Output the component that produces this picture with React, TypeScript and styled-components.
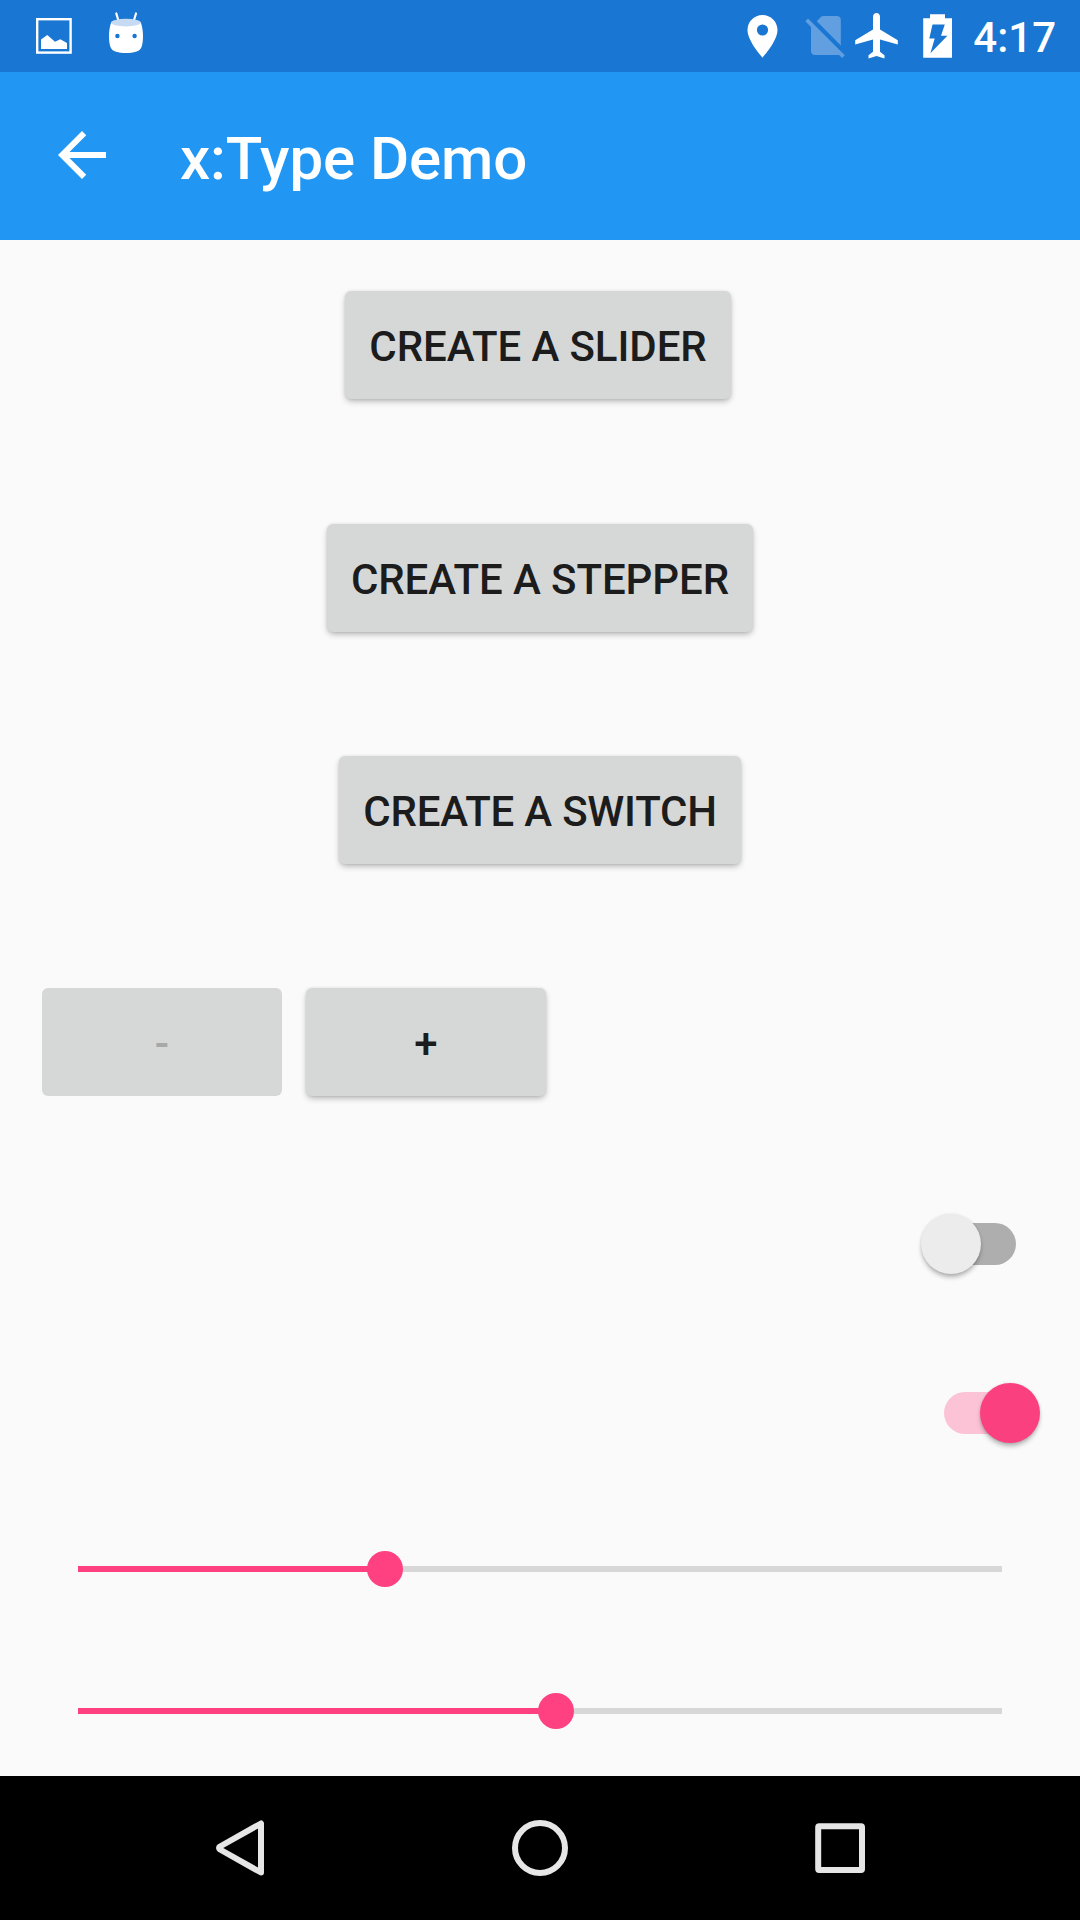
import React, { useState } from "react";
import styled, { createGlobalStyle } from "styled-components";

const GlobalStyle = createGlobalStyle`
  *, *::before, *::after { box-sizing: border-box; }
  body { margin: 0; background: #fafafa; }
`;

const Screen = styled.div`
  display: flex;
  flex-direction: column;
  width: 1080px;
  height: 1920px;
  overflow: hidden;
  background: #fafafa;
  font-family: Roboto, "Noto Sans", sans-serif;
`;

const StatusBar = styled.header`
  display: flex;
  justify-content: space-between;
  flex: 0 0 72px;
  background: #1976d2;
  color: #fff;
`;

const Notifications = styled.div`
  display: flex;
  gap: 36px;
  padding-left: 36px;
`;

const SystemIcons = styled.div`
  display: flex;
  padding-right: 24px;
`;

const Clock = styled.time`
  padding: 4px 0 0 14px;
  font-size: 42px;
  font-weight: 500;
  line-height: 68px;
`;

const Toolbar = styled.div`
  display: flex;
  align-items: center;
  flex: 0 0 168px;
  padding-left: 46px;
  background: #2196f3;
  color: #fff;
`;

const IconButton = styled.button`
  display: flex;
  width: 72px;
  height: 72px;
  margin: 0 62px 2px 0;
  padding: 0;
  border: 0;
  background: none;
  color: inherit;
`;

const Title = styled.h1`
  margin: 0;
  padding-top: 5px;
  font-size: 60px;
  font-weight: 500;
  letter-spacing: -0.08px;
  line-height: 72px;
`;

const Content = styled.main`
  display: flex;
  flex-direction: column;
  flex: 1;
  padding: 51px 42px 0;
`;

const Row = styled.div<{ $height: number; $align?: string }>`
  display: flex;
  flex: 0 0 ${(p) => p.$height}px;
  align-items: flex-start;
  justify-content: ${(p) => p.$align ?? "flex-start"};
  gap: 24px;
`;

const RaisedButton = styled.button<{ $width: number; $shift?: number; $tracking?: number }>`
  width: ${(p) => p.$width}px;
  height: 108px;
  margin: 0 ${(p) => p.$shift ?? 0}px 0 0;
  padding: 3px 0 0;
  border: 0;
  border-radius: 6px;
  background: #d6d8d7;
  box-shadow: 0 3px 6px -1px rgba(0, 0, 0, 0.3), 0 0 3px rgba(0, 0, 0, 0.08);
  color: #1c1c1c;
  font: 500 42px/50px Roboto, "Noto Sans", sans-serif;
  letter-spacing: ${(p) => p.$tracking ?? 0}px;
  white-space: nowrap;

  &:disabled {
    box-shadow: none;
    color: #a7a8a8;
  }
`;

const SwitchTrack = styled.button<{ $on: boolean }>`
  display: flex;
  align-items: center;
  justify-content: ${(p) => (p.$on ? "flex-end" : "flex-start")};
  width: 72px;
  height: 42px;
  margin: 0 22px 0 0;
  padding: 0;
  border: 0;
  border-radius: 21px;
  background: ${(p) => (p.$on ? "#fcc3d7" : "#aeaeae")};
`;

const SwitchThumb = styled.span<{ $on: boolean }>`
  flex: 0 0 60px;
  height: 60px;
  margin: 0 -23.5px;
  border-radius: 50%;
  background: ${(p) => (p.$on ? "#fb4080" : "#ececec")};
  box-shadow: 0 4px 5px -1px rgba(0, 0, 0, 0.3), 0 0 3px rgba(0, 0, 0, 0.1);
`;

const SliderTrack = styled.div`
  display: flex;
  align-items: center;
  width: 924px;
  height: 36px;
  margin-left: 36px;
`;

const SliderFill = styled.span`
  height: 6px;
  background: #ff4081;
`;

const SliderThumb = styled.span`
  flex: 0 0 36px;
  height: 36px;
  margin: 0 -18px;
  border-radius: 50%;
  background: #ff4081;
  z-index: 1;
`;

const SliderRest = styled.span`
  flex: 1;
  height: 6px;
  background: #d7d7d7;
`;

const NavBar = styled.nav`
  display: flex;
  justify-content: center;
  gap: 200px;
  flex: 0 0 144px;
  background: #000;
`;

const NavButton = styled.button`
  display: flex;
  width: 100px;
  height: 144px;
  padding: 0;
  border: 0;
  background: none;
`;

function Switch({ initial }: { initial: boolean }) {
  const [on, setOn] = useState(initial);
  return (
    <SwitchTrack $on={on} role="switch" aria-checked={on} onClick={() => setOn(!on)}>
      <SwitchThumb $on={on} />
    </SwitchTrack>
  );
}

function Slider({ value, max }: { value: number; max: number }) {
  return (
    <SliderTrack role="slider" aria-valuenow={value} aria-valuemax={max}>
      <SliderFill style={{ width: `${(value / max) * 100}%` }} />
      <SliderThumb />
      <SliderRest />
    </SliderTrack>
  );
}

const PictureIcon = () => (
  <svg width="36" height="72" viewBox="36 0 36 72">
    <rect x="37.2" y="19.2" width="33.4" height="33.4" fill="none" stroke="#fff" strokeWidth="2.4" />
    <path d="M41 49V39.5L47.3 35l7.7 6.8 5.3-2.6 6.7 3.8v6z" fill="#fff" />
  </svg>
);

const RobotIcon = () => (
  <svg width="36" height="72" viewBox="108 0 36 72">
    <path d="M116.3 13.5l2.4 8M136 13.5l-2.4 8" stroke="#fff" strokeWidth="2.2" strokeLinecap="round" />
    <path
      d="M111.3 22C109.8 26 109 31 109 36c0 5 .5 9 1.8 11.8C112.5 51.5 118 53 126 53s13.5-1.5 15.2-5.2C142.5 45 143 41 143 36c0-5-.8-10-2.3-14z"
      fill="#fff"
    />
    <ellipse cx="126" cy="22.6" rx="15" ry="3.8" fill="#c6dbf3" />
    <circle cx="117.4" cy="36" r="2.2" fill="#1976d2" />
    <circle cx="134.6" cy="36" r="2.2" fill="#1976d2" />
  </svg>
);

const LocationIcon = () => (
  <svg width="62" height="72" viewBox="741 0 62 72">
    <path
      fill="#fff"
      fillRule="evenodd"
      d="M762.5 15c-8.3 0-15 6.7-15 15 0 11.2 15 27.6 15 27.6s15-16.4 15-27.6c0-8.3-6.7-15-15-15zm0 20.6a5.6 5.6 0 1 1 0-11.2 5.6 5.6 0 0 1 0 11.2z"
    />
  </svg>
);

const NoSimIcon = () => (
  <svg width="48" height="72" viewBox="803 0 48 72">
    <g fill="#619fe0">
      <path d="M816.8 21.2L820.9 17q1-1 2.4-1h13.3q4.2 0 4.2 4.2v25.2z" />
      <path d="M808 18.5l36.8 36.8-2.7 2.7-3.3-3.3q-1 .3-2.2.3h-21.4q-4.200 0-4.200-4.200V26.900l-5.700-5.700z" />
    </g>
  </svg>
);

const AirplaneIcon = () => (
  <svg width="52" height="72" viewBox="851 0 52 72">
    <path
      fill="#fff"
      d="M897.8 44.6v-4.3L880 29.5V16.7c0-2-1.5-3.6-3.5-3.6s-3.5 1.6-3.5 3.6v12.8l-17.8 10.8v4.3L873 39.5v12.3l-4.5 3.4v3.2l8-2.3 8 2.3v-3.2l-4.5-3.4V39.5z"
    />
  </svg>
);

const BatteryIcon = () => (
  <svg width="56" height="72" viewBox="903 0 56 72">
    <path d="M930 14.3h15v3.900h7v39.600h-28.800V18.200h6.800z" fill="#fff" />
    <path d="M932.5 24.500h12.300l-3.800 11.300h6.400l-17 17.500 4.300-14.800h-5.400z" fill="#1976d2" />
  </svg>
);

export default function App() {
  return (
    <>
      <GlobalStyle />
      <Screen>
        <StatusBar>
          <Notifications>
            <PictureIcon />
            <RobotIcon />
          </Notifications>
          <SystemIcons>
            <LocationIcon />
            <NoSimIcon />
            <AirplaneIcon />
            <BatteryIcon />
            <Clock>4:17</Clock>
          </SystemIcons>
        </StatusBar>
        <Toolbar>
          <IconButton aria-label="Back">
            <svg width="72" height="72" viewBox="0 0 24 24">
              <path
                fill="currentColor"
                d="M20 11H7.830l5.590-5.590L12 4l-8 8 8 8 1.410-1.410L7.830 13H20z"
              />
            </svg>
          </IconButton>
          <Title>x:Type Demo</Title>
        </Toolbar>
        <Content>
          <Row $height={233} $align="center">
            <RaisedButton $width={386} $shift={4} $tracking={-0.08}>CREATE A SLIDER</RaisedButton>
          </Row>
          <Row $height={232} $align="center">
            <RaisedButton $width={426} $tracking={-0.08}>CREATE A STEPPER</RaisedButton>
          </Row>
          <Row $height={232} $align="center">
            <RaisedButton $width={402} $tracking={-0.22}>CREATE A SWITCH</RaisedButton>
          </Row>
          <Row $height={235}>
            <RaisedButton $width={240} disabled>-</RaisedButton>
            <RaisedButton $width={240}>+</RaisedButton>
          </Row>
          <Row $height={169} $align="flex-end">
            <Switch initial={false} />
          </Row>
          <Row $height={159} $align="flex-end">
            <Switch initial={true} />
          </Row>
          <Row $height={142}>
            <Slider value={307} max={924} />
          </Row>
          <Row $height={36}>
            <Slider value={478} max={924} />
          </Row>
        </Content>
        <NavBar>
          <NavButton aria-label="Back">
            <svg width="100" height="144" viewBox="190 1776 100 144">
              <path
                d="M261 1823.5v49L220 1849.500q-2-1.500 0-3z"
                fill="none"
                stroke="#e6e6e6"
                strokeWidth="6"
                strokeLinejoin="round"
              />
            </svg>
          </NavButton>
          <NavButton aria-label="Home">
            <svg width="100" height="144" viewBox="490 1776 100 144">
              <circle cx="540" cy="1848" r="25" fill="none" stroke="#e6e6e6" strokeWidth="6" />
            </svg>
          </NavButton>
          <NavButton aria-label="Overview">
            <svg width="100" height="144" viewBox="790 1776 100 144">
              <rect x="818.2" y="1826.2" width="43.800" height="43.800" rx="1" fill="none" stroke="#e6e6e6" strokeWidth="6" strokeLinejoin="round" />
            </svg>
          </NavButton>
        </NavBar>
      </Screen>
    </>
  );
}
